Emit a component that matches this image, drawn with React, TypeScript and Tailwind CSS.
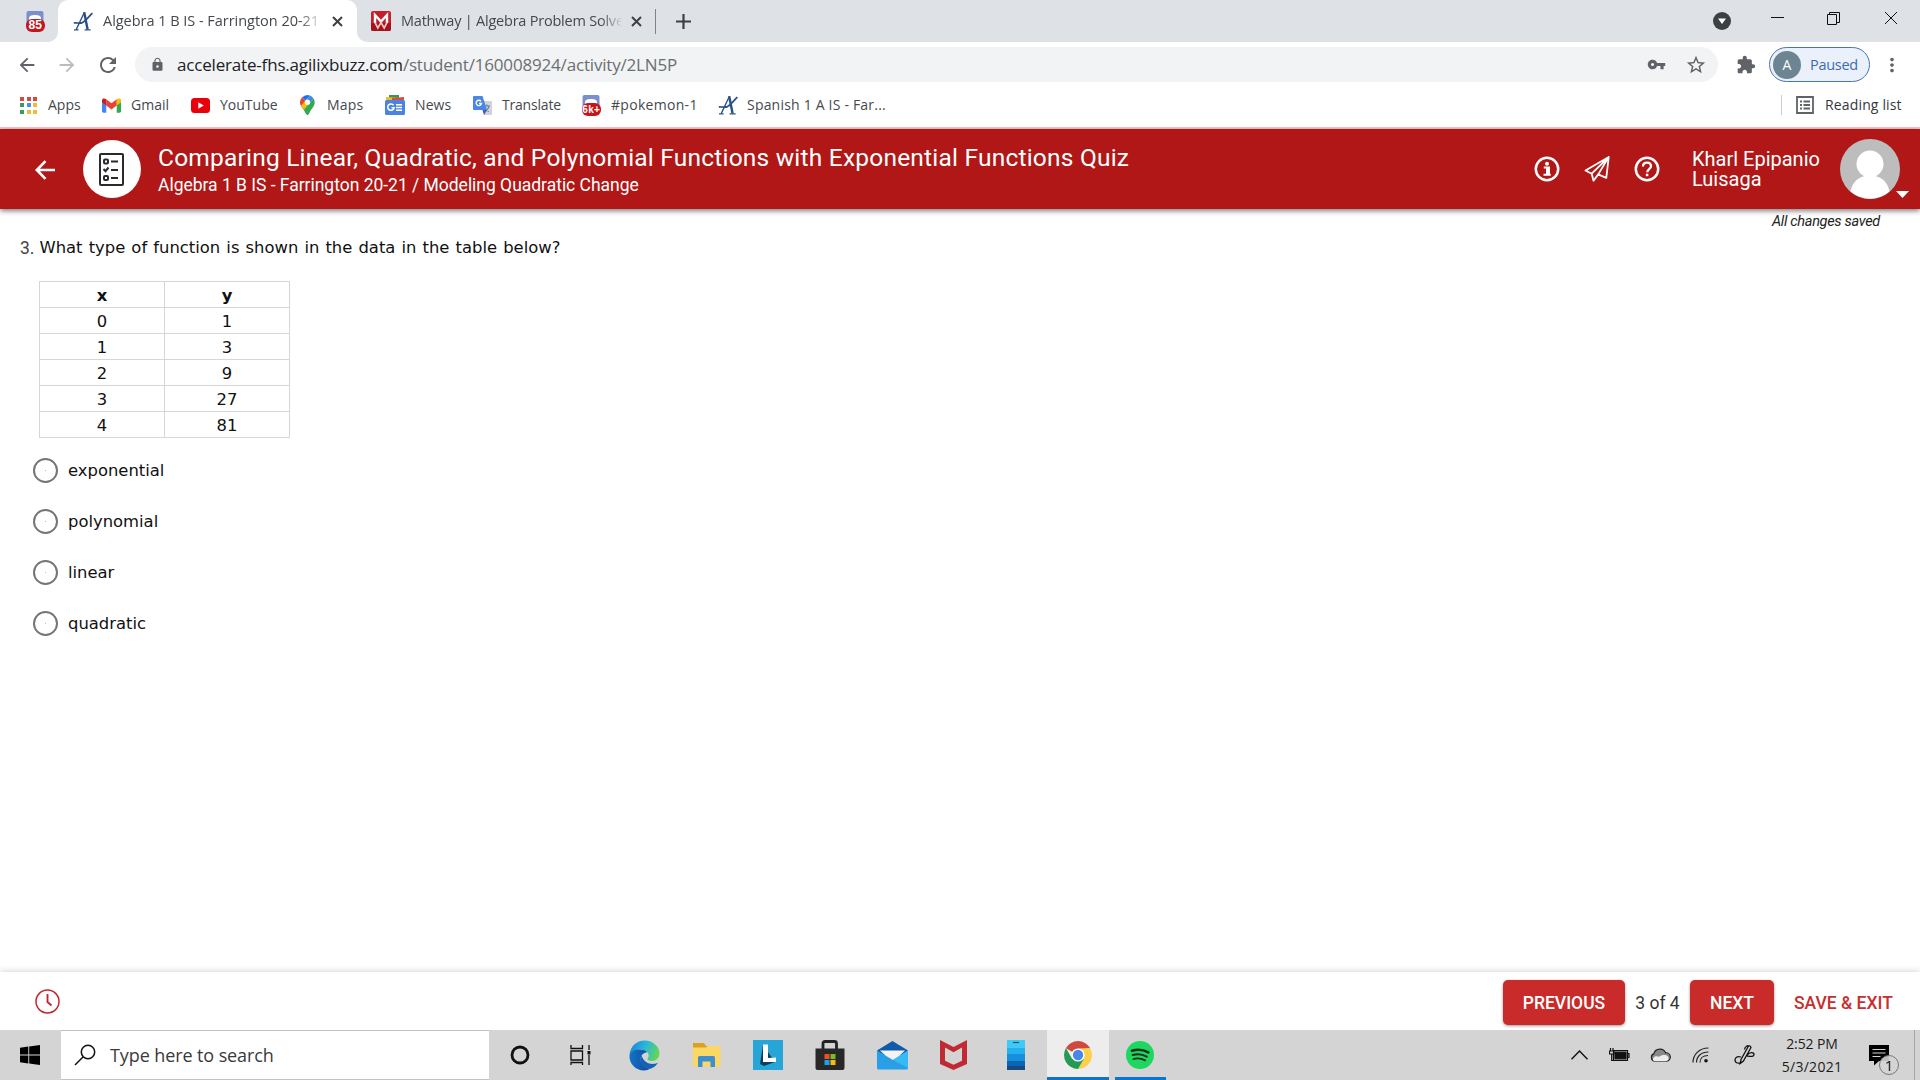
import type { ReactNode } from "react";
import {
  MdArrowBack, MdArrowForward, MdExtension, MdLock, MdMoreVert, MdRefresh, MdStarBorder, MdVpnKey,
} from "react-icons/md";

type IconProps = { className?: string };

/** Data */
const ROWS = [
  ["0", "1"],
  ["1", "3"],
  ["2", "9"],
  ["3", "27"],
  ["4", "81"],
];
const CHOICES = ["exponential", "polynomial", "linear", "quadratic"];

/** Favicons */
function AgilixIcon({ className }: IconProps) {
  return (
    <svg className={className} viewBox="0 0 20 20" fill="none" stroke="#2a4f86">
      <path d="M3.2 18.6 11.4 1.2" strokeWidth="1.3" />
      <path d="M11.2 1.2 14.6 18.4" strokeWidth="2.4" />
      <path d="M19.4 2.2C15.5 6 12.5 10 9.5 11.6 7 12.6 4 11.8.8 11.9" strokeWidth="1.7" />
      <path d="M1 18.9h4.6M11.6 18.9h6" strokeWidth="1.2" />
    </svg>
  );
}

function BadgeIcon({ label, className }: { label: string; className?: string }) {
  return (
    <svg className={className} viewBox="0 0 20 21">
      <rect x="1.5" y="0" width="17" height="19" rx="2" fill="#7b8fcb" />
      <path d="M4 7.5c0-3 3-3.5 6-3.5s6 .5 6 3.5V13H4z" fill="#fff" />
      <rect x="1" y="8" width="19" height="13" rx="6" fill="#c5161d" />
      <text
        x="10.3" y="18.4" textAnchor="middle" fill="#fff" fontWeight="bold"
        fontSize={label.length > 2 ? 10 : 12}
        fontFamily="Liberation Sans, sans-serif"
      >
        {label}
      </text>
    </svg>
  );
}

function MathwayIcon() {
  return (
    <svg className="size-5" viewBox="0 0 20 20">
      <rect width="20" height="20" rx="2" fill="#c4202a" />
      <path d="M0 12h20v6a2 2 0 0 1-2 2H2a2 2 0 0 1-2-2z" fill="#a5121b" />
      <path d="M4 12V4l6 6.500L16 4v8" fill="none" stroke="#fff" strokeWidth="2.400" />
      <path d="M4 11.500 6.800 17 10 11.500l3.200 5.500 2.800-5.500" fill="none" stroke="#f0c4c6" strokeWidth="1.700" />
    </svg>
  );
}

function AppsIcon() {
  const colors = ["#d9483b", "#d9483b", "#d9483b", "#3c9a5b", "#4b8df0", "#eebb3a", "#3c9a5b", "#eebb3a", "#eebb3a"];
  return (
    <div className="grid size-[17px] grid-cols-3 gap-[2.5px]">
      {colors.map((c, i) => (
        <span key={i} style={{ backgroundColor: c }} />
      ))}
    </div>
  );
}

function GmailIcon() {
  return (
    <svg className="h-[15px] w-[19px]" viewBox="0 0 20 15">
      <path d="M0 2v11.500A1.500 1.500 0 0 0 1.500 15H4.500V5z" fill="#4285f4" />
      <path d="M20 2v11.500a1.500 1.500 0 0 1-1.500 1.500H15.500V5z" fill="#34a853" />
      <path d="M4.500 1 10 5.200 15.500 1v6.500L10 11.600 4.500 7.500z" fill="#ea4335" />
      <path d="M0 2C0 0 2.400-.6 4.500 1v6.500L0 4.100z" fill="#c5221f" />
      <path d="M20 2c0-2-2.400-2.600-4.500-1v6.500L20 4.100z" fill="#fbbc04" />
    </svg>
  );
}

function YouTubeIcon() {
  return (
    <svg className="h-[15px] w-[19px]" viewBox="0 0 19 15">
      <rect width="19" height="15" rx="3.500" fill="#e8000b" />
      <path d="m7.300 4.300 5.500 3.200-5.500 3.200z" fill="#fff" />
    </svg>
  );
}

function MapsIcon() {
  return (
    <svg className="h-5 w-[15px]" viewBox="0 0 15 20">
      <path d="M7.500 0A7.200 7.200 0 0 0 2 2.600l3.600 3L10 .5A8 8 0 0 0 7.500 0z" fill="#1a73e8" />
      <path d="M2 2.600A7.300 7.300 0 0 0 1 11l4.600-5.400z" fill="#ea4335" />
      <path d="M10 .5 5.500 5.700 1 11c.7 1.500 1.800 2.700 2.800 4.100L13.500 3.600A7.200 7.200 0 0 0 10 .5z" fill="#4285f4" />
      <path d="M1 11c.7 1.500 1.800 2.700 2.800 4.100L9.500 8.600 5.600 5.600z" fill="#fbbc04" />
      <path d="M13.500 3.600 3.800 15.100C5 16.700 5.800 20 7.500 20c1.600 0 1.900-3 3.600-5.300 1.600-2.200 3.600-4 3.600-7.500 0-1.300-.4-2.500-1.200-3.600z" fill="#34a853" />
      <circle cx="7.500" cy="7.200" r="2.600" fill="#fff" />
    </svg>
  );
}

function NewsIcon() {
  return (
    <svg className="size-5" viewBox="0 0 20 20">
      <path d="M4 0h10v6H4z" fill="#2f9a55" />
      <path d="m1 2 15 1v5H1z" fill="#f2b92c" />
      <path d="m7 3 12-1v6H7z" fill="#dd4b3e" />
      <rect y="5" width="20" height="15" rx="1.500" fill="#4a84e0" />
      <path d="M8.600 10.300a3.200 3.200 0 1 0 .5 2.500H6.500M11 9.700h6M11 12.500h6M11 15.300h6" fill="none" stroke="#fff" strokeWidth="1.500" />
    </svg>
  );
}

function TranslateIcon() {
  return (
    <svg className="size-[19px]" viewBox="0 0 19 19">
      <path d="M7 5h11a1 1 0 0 1 1 1v12a1 1 0 0 1-1 1h-7z" fill="#cfd4dc" />
      <path d="M11 10h6M14 8.500V10m2 0c-.5 2.500-2 4.500-4 5.500m0-3.500c1 1.500 2.500 3 4 3.500" fill="none" stroke="#6d7f9c" strokeWidth="1.200" />
      <path d="M1 0h8.500l4.500 14H1a1 1 0 0 1-1-1V1a1 1 0 0 1 1-1z" fill="#4a86e8" />
      <path d="M8 5.300A2.700 2.700 0 1 0 8.500 7.500H6" fill="none" stroke="#fff" strokeWidth="1.300" />
      <path d="m9.500 14 1.500 5 3-5z" fill="#3a5fb5" />
    </svg>
  );
}

/** Browser chrome */
function CloseX() {
  return (
    <svg className="size-[11px] shrink-0" viewBox="0 0 11 11" stroke="#3c4043" strokeWidth="2">
      <path d="m1 1 9 9M10 1l-9 9" />
    </svg>
  );
}

function TabStrip() {
  return (
    <div className="flex h-[42px] shrink-0 bg-[#dee1e6] text-[14.5px] text-[#45494d]">
      <div className="flex w-[48px] items-center justify-end pr-[3px]">
        <BadgeIcon label="85" className="h-[21px] w-5" />
      </div>
      <div className="flex w-2.5 items-end bg-[#dee1e6]">
        <div className="size-2.5 bg-white">
          <div className="size-full rounded-br-[10px] bg-[#dee1e6]" />
        </div>
      </div>
      <div className="flex w-[299px] items-center rounded-t-[10px] bg-white pl-[15px]">
        <AgilixIcon className="size-5 shrink-0" />
        <div className="ml-[10px] w-[219px] overflow-hidden mask-r-from-90% whitespace-nowrap tracking-[-0.03px]">
          Algebra 1 B IS - Farrington 20-21
        </div>
        <div className="ml-[10px] flex"><CloseX /></div>
      </div>
      <div className="flex w-2.5 items-end bg-[#dee1e6]">
        <div className="size-2.5 bg-white">
          <div className="size-full rounded-bl-[10px] bg-[#dee1e6]" />
        </div>
      </div>
      <div className="flex w-[289px] items-center pl-[4px]">
        <MathwayIcon />
        <div className="ml-[10px] w-[222px] overflow-hidden mask-r-from-90% whitespace-nowrap tracking-[-0.22px]">
          Mathway | Algebra Problem Solve
        </div>
        <div className="ml-[8px] flex"><CloseX /></div>
        <div className="ml-[13px] h-[25px] w-px bg-[#808388]" />
      </div>
      <div className="flex w-[54px] items-center justify-center">
        <svg className="size-[15px]" viewBox="0 0 15 15" stroke="#3c4043" strokeWidth="2.200">
          <path d="M7.500 0v15M0 7.500h15" />
        </svg>
      </div>
      <div className="flex-1" />
      <div className="flex w-[36px] items-center justify-center">
        <svg className="size-[18px]" viewBox="0 0 18 18">
          <circle cx="9" cy="9" r="9" fill="#3c4043" />
          <path d="M5 6.500h8L9 12z" fill="#fff" />
        </svg>
      </div>
      <div className="flex h-[36px] w-[180px] items-center pl-[31px]">
        <svg className="h-3.5 w-[128px]" viewBox="0 0 128 14" fill="none" stroke="#111" strokeWidth="1">
          <path d="M0 6.500h13M56.500 3.500h9v10h-9zM58.500 3.500v-2h10v10h-3M114 1l12 12M126 1l-12 12" />
        </svg>
      </div>
    </div>
  );
}

function Toolbar() {
  return (
    <div className="flex h-[45px] shrink-0 items-center bg-white">
      <div className="flex w-[135px] items-center pl-[16px] text-[#5f6368]">
        <MdArrowBack className="size-[22px]" />
        <MdArrowForward className="ml-[18px] size-[22px] text-[#babcbe]" />
        <MdRefresh className="ml-[18px] size-6" />
      </div>
      <div className="flex h-[35px] w-[1583px] items-center rounded-full bg-[#f1f3f4] pl-[15px] text-[#5f6368]">
        <MdLock className="size-[15px]" />
        <div className="ml-[12px] flex-1 whitespace-nowrap text-[17px] tracking-[-0.18px] text-[#6b6f73]">
          <span className="text-[#202124]">accelerate-fhs.agilixbuzz.com</span>/student/160008924/activity/2LN5P
        </div>
        <MdVpnKey className="size-[19px]" />
        <MdStarBorder className="mr-[11px] ml-[19px] size-[22px]" />
      </div>
      <MdExtension className="ml-[18px] size-5 text-[#5f6368]" />
      <div className="ml-[13px] flex h-[35px] w-[101px] items-center rounded-full border-[1.5px] border-[#4b73b5] bg-[#eaf1fb] pl-[3px]">
        <div className="flex size-7 items-center justify-center rounded-full bg-[#6d8592] text-[14px] text-white">A</div>
        <div className="ml-[9px] text-[14.5px] tracking-[-0.3px] text-[#3f69b5]">Paused</div>
      </div>
      <MdMoreVert className="ml-[11px] size-[22px] text-[#5f6368]" />
    </div>
  );
}

function Bookmark({ icon, label, className }: { icon: ReactNode; label: string; className: string }) {
  return (
    <div className={`flex shrink-0 items-center whitespace-nowrap ${className}`}>
      {icon}
      <span className="-mt-[2px]">{label}</span>
    </div>
  );
}

function BookmarkBar() {
  return (
    <div className="flex h-[40px] shrink-0 items-center bg-white pb-[4px] pl-[20px] text-[14px] text-[#45494d]">
      <Bookmark icon={<AppsIcon />} label="Apps" className="w-[82px] gap-[11px]" />
      <Bookmark icon={<GmailIcon />} label="Gmail" className="w-[89px] gap-[10px]" />
      <Bookmark icon={<YouTubeIcon />} label="YouTube" className="w-[109px] gap-[10px]" />
      <Bookmark icon={<MapsIcon />} label="Maps" className="w-[85px] gap-[12px] tracking-[0.2px]" />
      <Bookmark icon={<NewsIcon />} label="News" className="w-[88px] gap-[10px] tracking-[0.1px]" />
      <Bookmark icon={<TranslateIcon />} label="Translate" className="w-[108px] gap-[10px] tracking-[-0.2px]" />
      <Bookmark icon={<BadgeIcon label="6k+" className="h-[21px] w-5" />} label="#pokemon-1" className="w-[137px] gap-[10px] tracking-[0.3px]" />
      <Bookmark icon={<AgilixIcon className="size-5" />} label="Spanish 1 A IS - Far..." className="w-[200px] gap-[9px] tracking-[0.2px]" />
      <div className="flex-1" />
      <div className="flex w-[139px] items-center">
        <div className="h-5 w-px bg-[#c9cbce]" />
        <svg className="ml-[14px] size-[18px]" viewBox="0 0 18 18" fill="none" stroke="#5f6368" strokeWidth="1.800">
          <path d="M1 1h16v16H1zM4 5.500h2M4 9h2M4 12.500h2M7.500 5.500H14M7.500 9H14M7.500 12.500H14" />
        </svg>
        <span className="-mt-[2px] ml-[11px] whitespace-nowrap tracking-[0.15px] text-[#35383b]">Reading list</span>
      </div>
    </div>
  );
}

/** Quiz page */
function QuizHeader() {
  return (
    <header className="z-10 flex h-[80px] shrink-0 items-center bg-[#b01716] font-['Roboto',sans-serif] text-white shadow-[0_2px_5px_rgba(0,0,0,0.5)]">
      <svg className="mt-px ml-[35px] size-5" viewBox="0 0 20 20" fill="none" stroke="#fff" strokeWidth="2.600">
        <path d="M20 10H2M10.500 1.200 1.800 10l8.700 8.800" />
      </svg>
      <div className="ml-[28px] flex size-[58px] items-center justify-center rounded-full bg-white">
        <svg className="mr-px h-[33px] w-[25px]" viewBox="0 0 25 33" fill="none" stroke="#2a2a2e" strokeWidth="2">
          <rect x="1" y="1" width="23" height="31" rx="1" />
          <path d="M12 8.500h7M12 17h7M12 25h7M4.500 16l2 2.200L9.500 14.500" />
          <rect x="5" y="6.500" width="4" height="4" rx="1" />
          <rect x="5" y="23" width="4" height="4" rx="1" />
        </svg>
      </div>
      <div className="ml-[17px] flex-1 pt-[3px] whitespace-nowrap">
        <div className="text-[24.5px] leading-[29px] tracking-[0.21px]">
          Comparing Linear, Quadratic, and Polynomial Functions with Exponential Functions Quiz
        </div>
        <div className="text-[17.5px] leading-[27px] tracking-[-0.02px]">Algebra 1 B IS - Farrington 20-21 / Modeling Quadratic Change</div>
      </div>
      <svg className="size-[26px]" viewBox="0 0 26 26" fill="none" stroke="#fff" strokeWidth="2.500">
        <circle cx="13" cy="13" r="11.200" />
        <circle cx="13" cy="7.700" r="2" fill="#fff" stroke="none" />
        <path d="M9.800 11.500H15V18M9.500 18.700h7.200" strokeWidth="2" />
        <path d="M13.500 11.500v7" strokeWidth="3" />
      </svg>
      <svg className="ml-[24px] size-[26px]" viewBox="0 0 26 26" fill="none" stroke="#fff" strokeWidth="1.800" strokeLinejoin="round">
        <path d="M24.700 1 1.500 14.500l6.200 3.200L24.700 1zM24.700 1l-2.400 20.800-8.100-3.400L24.700 1zM7.700 17.700l1.800 7 4.700-6.300" />
      </svg>
      <svg className="ml-[24px] size-[26px]" viewBox="0 0 26 26" fill="none" stroke="#fff" strokeWidth="2.500">
        <circle cx="13" cy="13" r="11.200" />
        <path d="M9 10.500c0-2.400 1.700-3.800 4-3.800s4 1.400 4 3.600c0 2.700-3.800 3-3.800 6" strokeWidth="2.300" />
        <path d="M13.100 17.700v2.500" />
      </svg>
      <div className="ml-[32px] w-[148px] text-[20px] leading-[20px]">Kharl Epipanio Luisaga</div>
      <svg className="h-[60px] w-[80px]" viewBox="0 0 80 60">
        <circle cx="30" cy="30" r="30" fill="#bdbdbd" />
        <circle cx="30" cy="25" r="13.500" fill="#fff" />
        <path d="M10.500 52.500C12.500 42 20 36.500 30 36.500S47.500 42 49.500 52.500A30 30 0 0 1 10.500 52.500z" fill="#fff" />
        <path d="M56 52h13l-6.500 7z" fill="#fff" />
      </svg>
    </header>
  );
}

function Question() {
  return (
    <main className="flex-1 bg-white font-['DejaVu_Sans',sans-serif] text-[16.4px] text-[#111]">
      <div className="flex h-[24px] items-center justify-end pt-[2px] pr-[40px] font-['Roboto',sans-serif] text-[14.5px] tracking-[-0.3px] text-[#222] italic">
        All changes saved
      </div>
      <div className="flex h-[28px] items-center pt-[2px] pl-[20px] whitespace-nowrap">
        <span className="font-['Roboto',sans-serif] text-[17.5px] text-[#444]">3.</span>
        <span className="ml-[5px] [word-spacing:0.9px]">What type of function is shown in the data in the table below?</span>
      </div>
      <table className="mt-[20px] ml-[39px] w-[251px] table-fixed border-collapse text-center">
        <thead>
          <tr className="h-[26px]">
            <th className="border border-[#d6d6d6] p-0 pt-px leading-[23px]">x</th>
            <th className="border border-[#d6d6d6] p-0 pt-px leading-[23px]">y</th>
          </tr>
        </thead>
        <tbody>
          {ROWS.map(([x, y]) => (
            <tr key={x} className="h-[26px]">
              <td className="border border-[#d6d6d6] p-0 pt-px leading-[23px]">{x}</td>
              <td className="border border-[#d6d6d6] p-0 pt-px leading-[23px]">{y}</td>
            </tr>
          ))}
        </tbody>
      </table>
      <div className="mt-[7px] pl-[33px]">
        {CHOICES.map((c) => (
          <label key={c} className="flex h-[51px] items-center">
            <span className="flex size-[25px] items-center justify-center rounded-full border-2 border-[#757575]">
              <span className="size-px bg-[#bbb]" />
            </span>
            <span className="mt-px ml-[10px]">{c}</span>
          </label>
        ))}
      </div>
    </main>
  );
}

function QuizFooter() {
  return (
    <footer className="flex h-[58px] shrink-0 items-center bg-white font-['Roboto',sans-serif] text-[17.5px] font-medium shadow-[0_-1px_6px_rgba(0,0,0,0.16)]">
      <svg className="ml-[35px] size-[25px]" viewBox="0 0 25 25" fill="none" stroke="#c0282d" strokeWidth="1.500">
        <circle cx="12.500" cy="12.500" r="11.500" />
        <path d="M12.500 5v8l4 3.500" strokeWidth="1.900" />
      </svg>
      <div className="flex-1" />
      <button className="mt-[3px] h-[45px] w-[122px] rounded-[5px] bg-[#c92a2a] pt-px text-white shadow-[0_1px_3px_rgba(0,0,0,0.4)]">PREVIOUS</button>
      <div className="mt-[5px] w-[65px] text-center font-normal text-[#333]">3 of 4</div>
      <button className="mt-[3px] h-[45px] w-[84px] rounded-[5px] bg-[#c92a2a] pt-px text-white shadow-[0_1px_3px_rgba(0,0,0,0.4)]">NEXT</button>
      <div className="mt-[5px] w-[146px] pl-[20px] whitespace-nowrap text-[#c62f2f]">SAVE &amp; EXIT</div>
    </footer>
  );
}

/** Taskbar icons */
const TASK_ICONS: ReactNode[] = [
  <svg className="size-5" viewBox="0 0 20 20">
    <circle cx="10" cy="10" r="8" fill="none" stroke="#111" strokeWidth="2.800" />
  </svg>,
  <svg className="mr-[4px] h-5 w-[21px]" viewBox="0 0 21 20" fill="none" stroke="#111" strokeWidth="1.300">
    <path d="M1 0v3.500h11.500V0M1 6h11.500v9H1zM1 20v-2.500h11.500V20M19 0v5M19 10v10" />
    <path d="M17.500 6h3v3.500h-3z" fill="#111" stroke="none" />
  </svg>,
  <svg className="size-[31px]" viewBox="0 0 31 31">
    <defs>
      <linearGradient id="edgeTop" x1="0" x2="1" y1=".3" y2=".6">
        <stop offset="0" stopColor="#1b86d8" />
        <stop offset=".5" stopColor="#2cb9d8" />
        <stop offset="1" stopColor="#63d94e" />
      </linearGradient>
      <linearGradient id="edgeLow" x1="0" x2="1">
        <stop offset="0" stopColor="#1273c8" />
        <stop offset="1" stopColor="#114a9c" />
      </linearGradient>
    </defs>
    <path d="M.5 14.500C1.500 6 8 .5 15.500.5 24 .5 30.500 6.500 30.500 13.500c0 4.500-3.200 7.500-7.500 7.500-3.200 0-5-1.200-4.500-2.300.6-1 1.200-1.700 1.200-3.200 0-3.500-4-6-8.500-6S2 12 .5 14.500z" fill="url(#edgeTop)" />
    <path d="M.5 16C1 11 5.500 9.500 11.200 9.500c3 0 5.500 1.100 7 2.700-4 .3-6.700 3.500-6.700 7.300 0 5 4.500 9 10 9-2 1.300-4 2-6.500 2C6.500 30.500.2 23.500.5 16z" fill="url(#edgeLow)" />
    <path d="M12.500 15.500c-3 4-1 12 6.500 13.500 4.500-.2 8-3 9.800-6.300-5 2.400-13 1.800-16.300-7.200z" fill="#1463b4" />
  </svg>,
  <svg className="h-[25px] w-[29px]" viewBox="0 0 29 25">
    <path d="M1 0h11l2 3H28v5H1z" fill="#d9a021" />
    <path d="M1 4.500h13L16 3h12.500v20.500H1z" fill="#fbd765" />
    <path d="M6 24v-9.500A1.500 1.500 0 0 1 7.500 13h14a1.500 1.500 0 0 1 1.500 1.500V24h-4.500v-5.500h-8V24z" fill="#3f8fce" />
  </svg>,
  <svg className="size-[30px]" viewBox="0 0 30 30">
    <rect width="30" height="30" fill="#27a5d6" />
    <path d="m10 5-3 19 4 2 11-4z" fill="#123c5c" />
    <path d="M10 4.500h5V18l8-.500V22H10z" fill="#fff" />
  </svg>,
  <svg className="mr-px size-[30px]" viewBox="0 0 30 30">
    <path d="M8 10V3.500A2 2 0 0 1 10 1.500h9.500a2 2 0 0 1 2 2V10" fill="none" stroke="#222" strokeWidth="2.800" />
    <path d="M.5 8.500h29V28a2 2 0 0 1-2 2h-25a2 2 0 0 1-2-2z" fill="#282828" />
    <path d="M9.500 14H14.500v5h-5z" fill="#ea5024" />
    <path d="M15.500 14h5v5h-5z" fill="#7fba1c" />
    <path d="M9.500 20h5v5h-5z" fill="#14a4ee" />
    <path d="M15.500 20h5v5h-5z" fill="#fdb913" />
  </svg>,
  <svg className="h-[29px] w-[31px]" viewBox="0 0 31 29">
    <path d="M0 9.500 15.500 0 31 9.500l-5 5H5z" fill="#0f5ba8" />
    <path d="M3 9.500h25L18 19h-5z" fill="#f3f3f3" />
    <path d="M0 9.500 16 19l15-9.500V27a1.500 1.500 0 0 1-1.500 1.500h-28A1.500 1.500 0 0 1 0 27z" fill="#2a9fe8" />
    <path d="m16 19 15-9.500V27z" fill="#37baf3" />
  </svg>,
  <svg className="mr-px h-[30px] w-[27px]" viewBox="0 0 27 30">
    <path d="M0 0 13.500 7 27 0v24l-13.500 6L0 24zM5 7.500v13.300l8.500 4 8.500-4V7.500l-8.500 4.700z" fill="#c22a33" fillRule="evenodd" />
  </svg>,
  <svg className="h-[30px] w-[18px]" viewBox="0 0 18 30">
    <rect width="18" height="30" rx="1" fill="#3ccbf4" />
    <path d="M0 8h18v7H0z" fill="#24b0ee" />
    <path d="M0 14h18v8H0z" fill="#1690dd" />
    <path d="M0 21h18v5H0z" fill="#0c64b4" />
    <path d="M0 26h18v4H0z" fill="#174a80" />
    <path d="M6 2.500h6" stroke="#14506e" strokeWidth="1.200" />
  </svg>,
  <svg className="size-7" viewBox="0 0 28 28">
    <path d="M14 14 1.900 7A14 14 0 0 1 26.100 7z" fill="#cf4a3d" />
    <path d="M14 7h12.100A14 14 0 0 1 14 28l6-10.500z" fill="#fbd04b" />
    <path d="M1.900 7A14 14 0 0 0 14 28l6.060-10.500H14L7.900 17.500z" fill="#259a55" />
    <path d="M14 7h12.100L14 7.500 8 10.500 1.900 7z" fill="#cf4a3d" />
    <circle cx="14" cy="14" r="6.600" fill="#fff" />
    <circle cx="14" cy="14" r="5.200" fill="#4a86ea" />
  </svg>,
  <svg className="size-7" viewBox="0 0 28 28" fill="none" stroke="#14331f" strokeLinecap="round">
    <circle cx="14" cy="14" r="14" fill="#1ed760" stroke="none" />
    <path d="M6 9.700c5.500-1.500 11.500-1 16.300 1.700" strokeWidth="2.600" />
    <path d="M6.700 14c4.700-1.300 9.800-.8 14 1.600" strokeWidth="2.200" />
    <path d="M7.400 18c4-1 8-.6 11.700 1.400" strokeWidth="1.800" />
  </svg>,
];

function Taskbar() {
  return (
    <div className="flex h-[50px] shrink-0 bg-[#d4d4d4] text-[#1b1b1b]">
      <div className="flex w-[61px] items-center justify-center pr-px">
        <svg className="size-5" viewBox="0 0 20 20" fill="#000">
          <path d="M0 2.800 8.300 1.600v8H0zM9.200 1.500 20 0v9.600H9.200zM0 10.500h8.300v8L0 17.300zM9.200 10.500H20V20L9.200 18.600z" />
        </svg>
      </div>
      <div className="flex w-[428px] items-center border-y border-[#c2c2c2] bg-white pl-[13px]">
        <svg className="size-[22px]" viewBox="0 0 22 22" fill="none" stroke="#111" strokeWidth="1.500">
          <circle cx="14" cy="8" r="6.700" />
          <path d="M9.200 12.800 1 21" />
        </svg>
        <span className="ml-[14px] text-[18px] tracking-[-0.1px] text-[#3a3a3a]">Type here to search</span>
      </div>
      {TASK_ICONS.map((icon, i) => (
        <div key={i} className={i === 9 ? "flex w-[62px] flex-col bg-[#ededed]" : "flex w-[62px] flex-col"}>
          <div className="flex flex-1 items-center justify-center pt-[3px]">{icon}</div>
          {i === 9 && <div className="h-[3px] bg-[#0f74c4]" />}
          {i === 10 && <div className="ml-[6px] h-[3px] w-[51px] bg-[#0a76d0]" />}
          {i < 9 && <div className="h-[3px]" />}
        </div>
      ))}
      <div className="flex-1" />
      <div className="flex w-[349px] items-center">
        <div className="flex w-[189px] items-center gap-[20px]">
          <svg className="mr-[1px] h-[10px] w-[17px]" viewBox="0 0 17 10" fill="none" stroke="#111" strokeWidth="1.400">
            <path d="M.5 9.300 8.500 1l8 8.300" />
          </svg>
          <svg className="h-[14px] w-[21px]" viewBox="0 0 21 14" fill="none" stroke="#111" strokeWidth="1.200">
            <path d="M4.500 2.500h14v10h-14zM18.500 5.500h1.500v4h-1.500M1.500 0v3M4 0v3M.5 3h4.500v3H.5zM2.700 6v6.500H5" />
            <path d="M6 4.200h11v6.600H6z" fill="#111" />
          </svg>
          <svg className="h-[14px] w-[21px]" viewBox="0 0 21 14" stroke="#222" strokeWidth="1.200">
            <path d="M4.500 13.200a4 4 0 0 1-.6-7.600A6.300 6.300 0 0 1 15.600 4.800a4.200 4.200 0 0 1 1 8.400z" fill="#8a8a8a" />
            <path d="M4.800 13.200c-2-.2-3-3 .2-4.700 1.500-.6 3 0 4 .3 2-1.600 4-2 6-1.800 1.500 0 3.500 1.500 3.700 3.200-.2 1.500-1 2.500-2.700 3z" fill="#eee" stroke="none" />
          </svg>
          <svg className="ml-px h-[16px] w-[17px]" viewBox="0 0 17 16" fill="none" stroke="#222" strokeWidth="1.200">
            <path d="M1 15.500C1 7.500 7 1.200 16.500 1M4.500 15.500c0-6 4.500-10.500 12-10.500M8 15.500c0-4 3-7 8-7" />
            <circle cx="14" cy="13.700" r="1.800" fill="#111" stroke="none" />
          </svg>
          <svg className="ml-[5px] h-5 w-[21px] shrink-0" viewBox="0 0 21 20" fill="none" stroke="#111" strokeWidth="1.300">
            <path d="M14.500 1 7 14.500l-.8 4 3.200-2.500L17 2.500c-.5-1.500-1.500-2-2.500-1.500zM10.500 4.500C11 1 14 .5 14.500 1M7 12c-4-1.500-6 1-6 3s1.500 3.500 5 3M13 10c3-3 7-3 7-.5s-3 2-7 1.500" />
          </svg>
        </div>
        <div className="ml-[8px] w-[88px] text-center text-[14px] leading-[23px]">
          <div className="tracking-[-0.1px]">2:52 PM</div>
          <div className="tracking-[0.25px]">5/3/2021</div>
        </div>
        <svg className="mt-[11px] ml-[13px] h-[32px] w-[32px]" viewBox="0 0 32 32">
          <path d="M0 0h20v16H10l-5 4.500V16H0z" fill="#000" />
          <path d="M3.500 4.500h13M3.500 8h13M3.500 11.500h8" stroke="#d4d4d4" strokeWidth="1.200" />
          <circle cx="20" cy="20" r="9.500" fill="#d4d4d4" fillOpacity="0.900" stroke="#777" />
          <text x="20" y="25.500" textAnchor="middle" fontSize="15" fill="#111" fontFamily="Open Sans, sans-serif">1</text>
        </svg>
        <div className="ml-[13px] h-full w-px bg-[#a5a5a5]" />
      </div>
    </div>
  );
}

export default function App() {
  return (
    <div className="flex h-[1080px] w-[1920px] flex-col overflow-hidden bg-white font-['Open_Sans',sans-serif]">
      <TabStrip />
      <Toolbar />
      <BookmarkBar />
      <div className="h-[2px] shrink-0 bg-[#efc9c9]" />
      <QuizHeader />
      <Question />
      <QuizFooter />
      <Taskbar />
    </div>
  );
}
